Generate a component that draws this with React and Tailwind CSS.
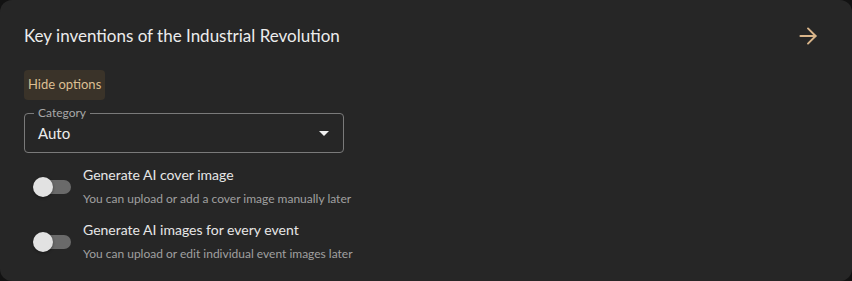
import React, { useState } from 'react';
import { ArrowRight } from 'lucide-react';

const font = { fontFamily: 'Lato, "Noto Sans", sans-serif' };

const Toggle = ({ on, onChange }) => (
  <button onClick={onChange} className="relative w-[38px] h-5 shrink-0">
    <span className="absolute left-[3px] right-0 top-[3px] h-[14px] rounded-full bg-[#6a6a6a]" />
    <span
      className={`absolute top-0 w-5 h-5 rounded-full bg-[#e2e2e2] shadow-[0_1px_3px_rgba(0,0,0,0.4)] ${
        on ? 'left-[18px]' : 'left-0'
      }`}
    />
  </button>
);

const OptionRow = ({ title, hint }) => {
  const [on, setOn] = useState(false);
  return (
    <div className="flex items-center pl-[9px] gap-3">
      <Toggle on={on} onChange={() => setOn(!on)} />
      <div className="flex flex-col">
        <span className="text-[14px] leading-5 text-[#e6e6e6]">{title}</span>
        <span className="text-[12px] leading-[18px] mt-[5px] text-[#a0a0a0]">{hint}</span>
      </div>
    </div>
  );
};

export default function App() {
  const [showOptions, setShowOptions] = useState(true);

  return (
    <div className="w-[852px] h-[281px] bg-[#121212]" style={font}>
      <div className="h-full rounded-xl bg-[#262626] px-6 pt-6">
        <div className="flex items-center justify-between h-6">
          <h2 className="text-[17px] text-[#ececec]">Key inventions of the Industrial Revolution</h2>
          <button className="mr-[7px] text-[#d9b58a]">
            <ArrowRight size={26} strokeWidth={1.8} />
          </button>
        </div>

        <button
          onClick={() => setShowOptions(!showOptions)}
          className="mt-[22px] h-[30px] px-[4px] rounded bg-[#3a3329] text-[13px] text-[#dcbf92]"
        >
          {showOptions ? 'Hide options' : 'Show options'}
        </button>

        {showOptions && (
          <>
            <div className="relative mt-[13px] w-[320px] h-[40px] border border-[#7a7a7a] rounded flex items-center justify-between pl-[13px] pr-[13px] pt-[1px]">
              <span className="absolute -top-[8px] left-[9px] px-[4px] bg-[#262626] text-[12px] leading-[14px] text-[#a8a8a8]">
                Category
              </span>
              <span className="text-[15px] text-[#ececec]">Auto</span>
              <svg width="10" height="5" viewBox="0 0 10 5" className="mr-[1px]">
                <path d="M0 0h10L5 5z" fill="#f0f0f0" />
              </svg>
            </div>

            <div className="mt-3 flex flex-col gap-3">
              <OptionRow
                title="Generate AI cover image"
                hint="You can upload or add a cover image manually later"
              />
              <OptionRow
                title="Generate AI images for every event"
                hint="You can upload or edit individual event images later"
              />
            </div>
          </>
        )}
      </div>
    </div>
  );
}
